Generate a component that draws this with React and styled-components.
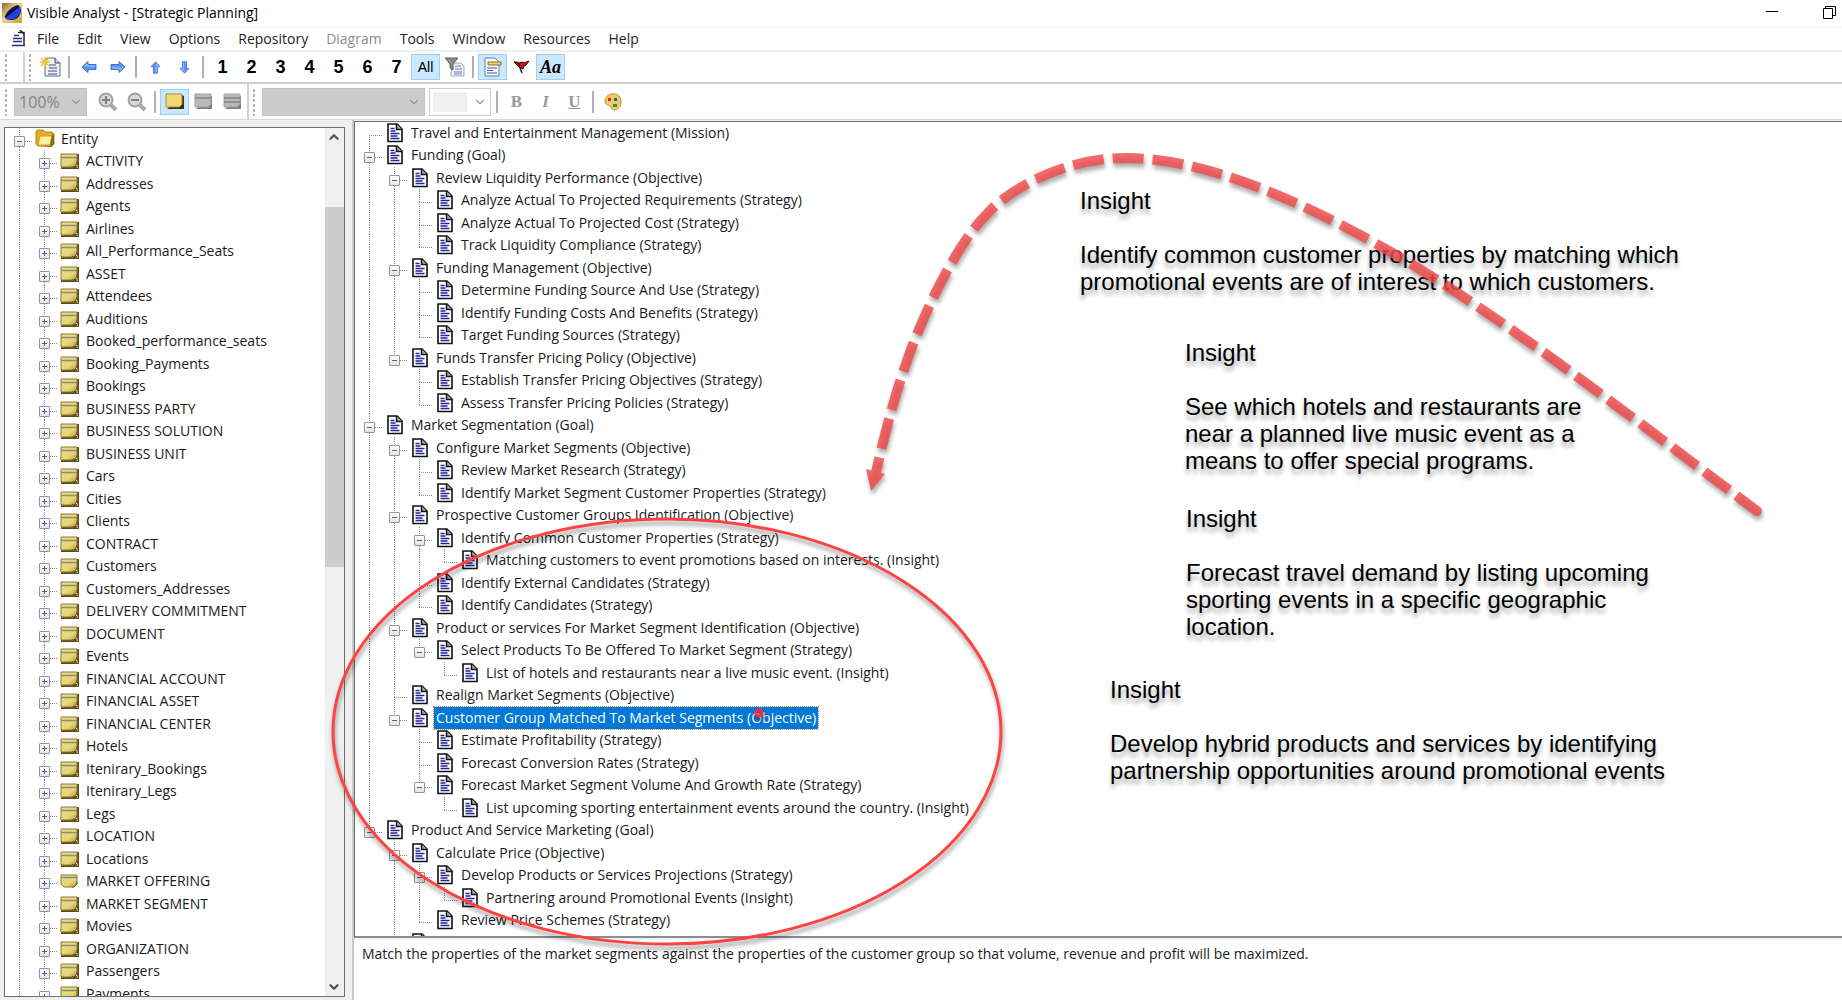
import { ChevronDown, ChevronUp } from 'lucide-react'
import { useState } from 'react'
import styled, { createGlobalStyle } from 'styled-components'

const GlobalStyle = createGlobalStyle`
    * {
        box-sizing: border-box;
    }
    body {
        margin: 0;
        overflow: hidden;
        background: #fff;
        color: #1a1a1a;
        font-family: 'Open Sans', 'Segoe UI', sans-serif;
        font-size: 14px;
    }
    button, select {
        font: inherit;
        color: inherit;
    }
`

const dotsDown = 'repeating-linear-gradient(to bottom, #8a8a8a 0 1px, transparent 1px 2px)'
const dotsAcross = 'repeating-linear-gradient(to right, #8a8a8a 0 1px, transparent 1px 2px)'

const Window = styled.div`
    position: relative;
    display: flex;
    flex-direction: column;
    height: 100vh;
`

const TitleBar = styled.header`
    display: flex;
    align-items: center;
    height: 27px;
    padding: 0 6px 2px 2px;
`

const Title = styled.h1`
    flex: 1;
    margin: 0 0 0 5px;
    font-size: 14px;
    font-weight: 400;
    color: #000;
`

const WindowButton = styled.button`
    display: flex;
    justify-content: flex-end;
    width: 58px;
    padding: 0;
    border: 0;
    background: none;
`

const MenuBar = styled.nav`
    display: flex;
    align-items: center;
    gap: 18px;
    height: 25px;
    padding: 0 12px;
    border-top: 1px solid #f2f2f2;
    border-bottom: 2px solid #f0f0f0;
`

const MenuIcon = styled.span`
    display: flex;
    width: 14px;
    margin-right: -7px;
`

const MenuItem = styled.button`
    padding: 0;
    border: 0;
    background: none;
    line-height: 20px;
    color: #222;
    &:disabled {
        color: #8c8c8c;
    }
`

const ToolBar = styled.div`
    display: flex;
    align-items: center;
    height: ${({ $height }) => $height}px;
    padding-left: 4px;
    border-bottom: ${({ $line }) => $line};
`

const Grip = styled.span`
    width: 4px;
    height: 28px;
    margin-right: ${({ $gap }) => $gap}px;
    background: radial-gradient(#b4b4b4 1px, transparent 1px) 0 0 / 4px 5px;
`

const BandEnd = styled.span`
    width: 2px;
    height: 100%;
    margin-right: 3px;
    background: #d2d2d2;
`

const Separator = styled.span`
    width: 9px;
    height: 22px;
    background: linear-gradient(#b0b0b0, #b0b0b0) 3px 0 / 2px 100% no-repeat;
`

const ToolButton = styled.button`
    display: flex;
    align-items: center;
    justify-content: center;
    width: 29px;
    height: 26px;
    padding: 0;
    border: 1px solid ${({ $active }) => ($active ? '#99d1ff' : 'transparent')};
    background: ${({ $active }) => ($active ? '#cce8ff' : 'none')};
    font-family: ${({ $serif }) => ($serif ? "'Liberation Serif', serif" : "'Liberation Sans', sans-serif")};
    font-size: ${({ $size }) => $size || 18}px;
    font-weight: ${({ $light }) => ($light ? 400 : 700)};
    font-style: ${({ $italic }) => ($italic ? 'italic' : 'normal')};
    text-decoration: ${({ $underline }) => ($underline ? 'underline' : 'none')};
    color: #000;
    &:disabled {
        color: #999;
    }
`

const SelectBox = styled.label`
    display: grid;
    align-items: center;
    width: ${({ $width }) => $width}px;
    height: 28px;
    margin-right: ${({ $gap }) => $gap}px;
    & > * {
        grid-area: 1 / 1;
    }
    & > svg {
        justify-self: end;
        margin-right: 4px;
        pointer-events: none;
    }
`

const Select = styled.select`
    width: 100%;
    height: 28px;
    padding: 0 4px;
    appearance: none;
    border: ${({ $plain }) => ($plain ? '1px solid #ccc' : '1px solid #c0c0c0')};
    border-radius: 0;
    background: ${({ $plain }) => ($plain ? 'linear-gradient(#f0f0f0, #f0f0f0) 3px 3px / 34px 20px no-repeat #fff' : '#ccc')};
    font-size: 16px;
    opacity: 1;
    color: #848484;
`

const Body = styled.main`
    flex: 1;
    display: flex;
    min-height: 0;
    background: #f0f0f0;
`

const EntityPane = styled.aside`
    display: flex;
    width: 341px;
    margin: 7px 0 3px 4px;
    border: 1px solid #6f6f6f;
    background: #fff;
`

const Tree = styled.div`
    flex: 1;
    min-width: 0;
    overflow: hidden;
`

const ScrollBar = styled.div`
    display: flex;
    flex-direction: column;
    justify-content: space-between;
    align-items: center;
    width: 19px;
    padding: 2px 2px 2px 0;
    background: linear-gradient(#cdcdcd, #cdcdcd) 0 79px / 100% 360px no-repeat #f0f0f0;
    color: #555;
`

const Splitter = styled.div`
    width: 9px;
    border-right: 2px solid #c8c8c8;
`

const PlanPane = styled.section`
    flex: 1;
    display: flex;
    flex-direction: column;
    min-width: 0;
    margin-top: 1px;
`

const PlanTree = styled(Tree)`
    border-top: 1px solid #6f6f6f;
    border-left: 1px solid #6f6f6f;
    border-bottom: 2px solid #8c8c8c;
    background: #fff;
`

const Description = styled.p`
    height: 62px;
    margin: 0;
    padding: 3px 8px;
    border-top: 2px solid #f4f4f4;
    background: #fff;
    line-height: 22px;
`

const Row = styled.div`
    display: flex;
    height: 22px;
    padding-left: 2px;
    white-space: nowrap;
    &:nth-child(even) {
        height: 23px;
    }
`

const Guide = styled.span`
    flex: none;
    display: flex;
    justify-content: center;
    width: 25px;
    padding-top: 8px;
    background:
        ${({ $up }) => ($up ? dotsDown : 'none')} 12px 0 / 1px 13px no-repeat,
        ${({ $down }) => ($down ? dotsDown : 'none')} 12px 13px / 1px 10px no-repeat,
        ${({ $across }) => ($across ? dotsAcross : 'none')} 12px 13px / 13px 1px no-repeat;
`

const Toggle = styled.button`
    display: block;
    width: 11px;
    height: 11px;
    padding: 0;
    border: 1px solid #949494;
    border-radius: 1px;
    background:
        linear-gradient(#4763a8, #4763a8) center / 5px 1px no-repeat,
        linear-gradient(#4763a8, #4763a8) center / 1px ${({ $open }) => ($open ? 0 : 5)}px no-repeat,
        linear-gradient(#fff, #e4e4e4);
`

const IconSlot = styled.span`
    flex: none;
    display: flex;
    justify-content: center;
    width: 20px;
    margin: 1px 4px 0 3px;
`

const Label = styled.span`
    height: 22px;
    padding: 0 2px;
    line-height: 21px;
    ${({ $selected }) => $selected && `
        background: #0078d7;
        color: #fff;
        outline: 1px dotted #d08a4a;
    `}
`

const Annotations = styled.svg`
    position: absolute;
    top: 0;
    left: 0;
    overflow: visible;
    pointer-events: none;
    filter: drop-shadow(1px 4px 2px rgba(0, 0, 0, .4));
`

const Note = styled.div`
    position: absolute;
    left: ${({ $x }) => $x}px;
    top: ${({ $y }) => $y}px;
    width: ${({ $width }) => $width}px;
    font-family: 'Liberation Sans', Arial, sans-serif;
    font-size: 24px;
    line-height: 27px;
    color: #000;
    text-shadow: 0 5px 4px rgba(0, 0, 0, .35);
    & > p {
        margin: 0 0 27px;
    }
`

const AppLogo = () => (
    <svg width="20" height="20" viewBox="0 0 20 20">
        <defs>
            <linearGradient id="gold" x1="0" y1="0" x2="1" y2="1">
                <stop offset="0" stopColor="#8f6524" />
                <stop offset=".45" stopColor="#f0d484" />
                <stop offset="1" stopColor="#c99a35" />
            </linearGradient>
        </defs>
        <rect width="20" height="20" fill="url(#gold)" />
        <path d="M3 13C5 8 11 3 16 2l3 5c0 5-4 10-9 10-4 0-7-1-7-4z" fill="#10126e" />
        <path d="M7 12l11-9c2 5-1 11-6 13-3 1-7 1-9-1z" fill="#2440dc" />
        <path d="M3 14L17 3" stroke="#0a0a30" strokeWidth="1.5" />
    </svg>
)

const MenuDoc = () => (
    <svg width="14" height="18" viewBox="0 0 14 18" fill="none">
        <path d="M6 2.500h6v13.500M8 0l4.500 4.500" stroke="#222" strokeWidth="1.500" />
        <path d="M2 5.500h5M1 8.500h9M1 11.500h9M0 15.500h13" stroke="#2b2b85" strokeWidth="1.500" />
    </svg>
)

const DocIcon = () => (
    <svg width="16" height="20" viewBox="0 0 16 20">
        <path d="M1 1h9l5 5v12.500H1z" fill="#fff" stroke="#111" strokeWidth="1.600" />
        <path d="M9.500 1v5.500H15" fill="#aaa" stroke="#111" strokeWidth="1.500" />
        <path d="M3.500 5.500h4M3.500 8h5M3.500 10.500h9M3.500 13h7M3.500 15.500h9" stroke="#22229a" strokeWidth="1.400" />
    </svg>
)

const EntityIcon = ({ plain }) => (
    <svg width="20" height="20" viewBox="0 0 20 20">
        <defs>
            <linearGradient id="entity" x1="0" y1="0" x2="1" y2="1">
                <stop offset="0" stopColor="#e9dc8c" />
                <stop offset=".6" stopColor="#e8d577" />
                <stop offset="1" stopColor="#b7983a" />
            </linearGradient>
        </defs>
        {!plain && <path d="M1 18h18V3h-2v12H1z" fill="#5b4c1c" />}
        {!plain && <path d="M16 17l2-3v3z" fill="#c4a93f" />}
        <path d={plain ? 'M1 4h16v9l-3 3H4l-3-3z' : 'M1 3h16v9l-3 4H1z'} fill="url(#entity)" stroke="#8c7836" />
        <path d="M1 6.500h16" stroke="#8d8a72" strokeWidth="1.500" />
        <path d="M12 16c3 0 5-2 5-5" fill="none" stroke="#6b5920" />
    </svg>
)

const FolderIcon = () => (
    <svg width="20" height="19" viewBox="0 0 20 19">
        <path d="M1 3l1-2h6l2 2h7l2 2v10l-2 2H3l-2-2z" fill="#e3ab25" stroke="#b5841a" />
        <path d="M5 7h12l-2 9H3z" fill="#fff0a0" stroke="#d19c1e" />
        <path d="M17 6l2-1v10l-3 3H5l10-1z" fill="#8a6a1c" />
    </svg>
)

const NewIcon = () => (
    <svg width="21" height="20" viewBox="0 0 21 20">
        <path d="M7 1h8l5 5v13H5V4z" fill="#eef3fb" stroke="#5b6f96" />
        <path d="M15 1v5h5" fill="#cdd9ee" stroke="#33466e" />
        <path d="M9 8h7M9 11h8M8 14h9M8 17h9" stroke="#3b4d78" />
        <path d="M5 0v10M0 5h10M1 1l8 8M9 1L1 9" stroke="#edc531" strokeWidth="1.500" />
    </svg>
)

const ArrowIcon = ({ turn, size }) => (
    <svg width={size} height={size} viewBox="0 0 16 16">
        <g transform={`rotate(${turn} 8 8)`}>
            <path d="M1 8l6-5.500v3h8v5H7v3z" fill="#5f93ee" stroke="#3f6fcf" />
            <path d="M3 8l3-3v2h8" fill="none" stroke="#a4c6ff" />
        </g>
    </svg>
)

const FilterIcon = () => (
    <svg width="20" height="20" viewBox="0 0 20 20">
        <path d="M7 6h9l3 3v10H6z" fill="#eef2fa" stroke="#9aa8c4" />
        <path d="M10 9h6M10 12h7M9 15h8M9 17h8" stroke="#7080a8" />
        <path d="M0 1h13L8 7v6l-3-2V7z" fill="#8b8b8b" stroke="#5d5d5d" />
    </svg>
)

const HighlightDocIcon = () => (
    <svg width="18" height="20" viewBox="0 0 18 20">
        <path d="M1 1h10l4 4v14H1z" fill="#f4f7fd" stroke="#6a7ba4" />
        <path d="M3 11h10M3 13.500h6M3 16h10" stroke="#4c5f91" />
        <path d="M4 5h13v3H4z" fill="#f3d255" stroke="#8d762a" />
    </svg>
)

const FlagIcon = () => (
    <svg width="16" height="14" viewBox="0 0 16 14">
        <path d="M0 2h3l2 1 3-1 2 1 5-2-3 4-2 1-1 3-4-2z" fill="#d80d10" stroke="#300" />
        <path d="M4 3l4 10" stroke="#222" strokeWidth="1.500" />
    </svg>
)

const ZoomIcon = ({ plus }) => (
    <svg width="20" height="20" viewBox="0 0 20 20">
        <circle cx="8" cy="8" r="6.500" fill="#d8d8d8" stroke="#a0a0a0" strokeWidth="2" />
        <path d={plus ? 'M4 8h8M8 4v8' : 'M4 8h8'} stroke="#808080" strokeWidth="2" />
        <path d="M13 13l5 5" stroke="#a8a8a8" strokeWidth="4" />
    </svg>
)

const GreyBoxIcon = ({ lines }) => (
    <svg width="19" height="17" viewBox="0 0 19 17">
        <path d="M2 16h16V3h-2z" fill="#808080" />
        <path d="M1 1h16v10l-3 3H1z" fill="#b9b9b9" stroke="#a0a0a0" />
        {lines.map(y => <path key={y} d={`M1 ${y}h16`} stroke="#858585" strokeWidth="1.500" />)}
    </svg>
)

const NoteIcon = () => (
    <svg width="20" height="17" viewBox="0 0 20 17">
        <path d="M2 16h17V3l-2-1z" fill="#3c3210" />
        <path d="M1 1h16v10l-3 3H1z" fill="#f2d976" stroke="#a88d32" />
        <path d="M14 14c0-2 1-3 3-3z" fill="#fff2b0" />
    </svg>
)

const PaletteIcon = () => (
    <svg width="18" height="18" viewBox="0 0 18 18">
        <path d="M8 1c6-1 9 3 9 8 0 4-3 8-7 8-3 0-2-3-4-4-1-1-5-1-5-5 0-3 3-7 7-7z" fill="#f0cd62" stroke="#b88f32" />
        <path d="M4 5h3v3H4z" fill="#d8281c" />
        <path d="M10 5h3v3h-3z" fill="#2457c8" />
        <path d="M9 11h4v3H9z" fill="#279a34" />
    </svg>
)

const menuItems = ['File', 'Edit', 'View', 'Options', 'Repository', 'Diagram', 'Tools', 'Window', 'Resources', 'Help']

const entities = [
    'ACTIVITY', 'Addresses', 'Agents', 'Airlines', 'All_Performance_Seats', 'ASSET', 'Attendees', 'Auditions',
    'Booked_performance_seats', 'Booking_Payments', 'Bookings', 'BUSINESS PARTY', 'BUSINESS SOLUTION',
    'BUSINESS UNIT', 'Cars', 'Cities', 'Clients', 'CONTRACT', 'Customers', 'Customers_Addresses',
    'DELIVERY COMMITMENT', 'DOCUMENT', 'Events', 'FINANCIAL ACCOUNT', 'FINANCIAL ASSET', 'FINANCIAL CENTER',
    'Hotels', 'Itenirary_Bookings', 'Itenirary_Legs', 'Legs', 'LOCATION', 'Locations', 'MARKET OFFERING',
    'MARKET SEGMENT', 'Movies', 'ORGANIZATION', 'Passengers', 'Payments',
]

// [depth, label]
const plan = [
    [0, 'Travel and Entertainment Management (Mission)'],
    [0, 'Funding (Goal)'],
    [1, 'Review Liquidity Performance (Objective)'],
    [2, 'Analyze Actual To Projected Requirements (Strategy)'],
    [2, 'Analyze Actual To Projected Cost (Strategy)'],
    [2, 'Track Liquidity Compliance (Strategy)'],
    [1, 'Funding Management (Objective)'],
    [2, 'Determine Funding Source And Use (Strategy)'],
    [2, 'Identify Funding Costs And Benefits (Strategy)'],
    [2, 'Target Funding Sources (Strategy)'],
    [1, 'Funds Transfer Pricing Policy (Objective)'],
    [2, 'Establish Transfer Pricing Objectives (Strategy)'],
    [2, 'Assess Transfer Pricing Policies (Strategy)'],
    [0, 'Market Segmentation (Goal)'],
    [1, 'Configure Market Segments (Objective)'],
    [2, 'Review Market Research (Strategy)'],
    [2, 'Identify Market Segment Customer Properties (Strategy)'],
    [1, 'Prospective Customer Groups Identification (Objective)'],
    [2, 'Identify Common Customer Properties (Strategy)'],
    [3, 'Matching customers to event promotions based on interests. (Insight)'],
    [2, 'Identify External Candidates (Strategy)'],
    [2, 'Identify Candidates (Strategy)'],
    [1, 'Product or services For Market Segment Identification (Objective)'],
    [2, 'Select Products To Be Offered To Market Segment (Strategy)'],
    [3, 'List of hotels and restaurants near a live music event. (Insight)'],
    [1, 'Realign Market Segments (Objective)'],
    [1, 'Customer Group Matched To Market Segments (Objective)'],
    [2, 'Estimate Profitability (Strategy)'],
    [2, 'Forecast Conversion Rates (Strategy)'],
    [2, 'Forecast Market Segment Volume And Growth Rate (Strategy)'],
    [3, 'List upcoming sporting entertainment events around the country. (Insight)'],
    [0, 'Product And Service Marketing (Goal)'],
    [1, 'Calculate Price (Objective)'],
    [2, 'Develop Products or Services Projections (Strategy)'],
    [3, 'Partnering around Promotional Events (Insight)'],
    [2, 'Review Price Schemes (Strategy)'],
    [1, ''],
]

const notes = [
    { x: 1080, y: 187, width: 640, text: 'Identify common customer properties by matching which promotional events are of interest to which customers.' },
    { x: 1185, y: 339, width: 420, text: 'See which hotels and restaurants are near a planned live music event as a means to offer special programs.' },
    { x: 1186, y: 505, width: 480, text: 'Forecast travel demand by listing upcoming sporting events in a specific geographic location.' },
    { x: 1110, y: 676, width: 600, text: 'Develop hybrid products and services by identifying partnership opportunities around promotional events' },
]

// true when a later row sits on the same level, before the branch closes
const continues = (rows, index, level) => {
    const next = rows.slice(index + 1).find(([depth]) => depth <= level)
    return Boolean(next) && next[0] === level
}

const PlanRow = ({ index, selected, onSelect }) => {
    const [depth, label] = plan[index]
    const hasChildren = index + 1 < plan.length && plan[index + 1][0] > depth
    return (
        <Row role="treeitem" aria-selected={selected} onClick={onSelect}>
            {Array.from({ length: depth }, (_, level) => {
                const line = continues(plan, index, level)
                return <Guide key={level} $up={line} $down={line} />
            })}
            <Guide $up={index > 0} $down={continues(plan, index, depth)} $across>
                {hasChildren && <Toggle $open aria-label="Collapse" />}
            </Guide>
            <IconSlot><DocIcon /></IconSlot>
            <Label $selected={selected}>{label}</Label>
        </Row>
    )
}

const App = () => {
    const [selected, setSelected] = useState(26)
    const [level, setLevel] = useState('All')

    return (
        <Window>
            <GlobalStyle />
            <TitleBar>
                <AppLogo />
                <Title>Visible Analyst - [Strategic Planning]</Title>
                <WindowButton aria-label="Minimize">
                    <svg width="12" height="13" viewBox="0 0 12 13"><path d="M0 5.500h12" stroke="#000" /></svg>
                </WindowButton>
                <WindowButton aria-label="Restore">
                    <svg width="13" height="13" viewBox="0 0 13 13" fill="none" stroke="#000">
                        <path d="M.5 2.500h9v10h-9zM2.500 2.500v-2h10v9h-3" />
                    </svg>
                </WindowButton>
            </TitleBar>

            <MenuBar>
                <MenuIcon><MenuDoc /></MenuIcon>
                {menuItems.map(item => (
                    <MenuItem key={item} disabled={item === 'Diagram'}>{item}</MenuItem>
                ))}
            </MenuBar>

            <ToolBar $height={32} $line="2px solid #cfcfcf">
                <Grip $gap={15} />
                <BandEnd />
                <Grip $gap={4} />
                <ToolButton aria-label="New"><NewIcon /></ToolButton>
                <Separator />
                <ToolButton aria-label="Back"><ArrowIcon turn={0} size={16} /></ToolButton>
                <ToolButton aria-label="Forward"><ArrowIcon turn={180} size={16} /></ToolButton>
                <Separator />
                <ToolButton aria-label="Up"><ArrowIcon turn={90} size={13} /></ToolButton>
                <ToolButton aria-label="Down"><ArrowIcon turn={270} size={13} /></ToolButton>
                <Separator />
                {[1, 2, 3, 4, 5, 6, 7].map(n => (
                    <ToolButton key={n} $active={level === n} onClick={() => setLevel(n)}>{n}</ToolButton>
                ))}
                <ToolButton $active={level === 'All'} $light $size={14} onClick={() => setLevel('All')}>All</ToolButton>
                <ToolButton aria-label="Filter"><FilterIcon /></ToolButton>
                <Separator />
                <ToolButton $active aria-label="Highlight"><HighlightDocIcon /></ToolButton>
                <ToolButton aria-label="Flag"><FlagIcon /></ToolButton>
                <ToolButton $active $serif $italic $size={18}>Aa</ToolButton>
            </ToolBar>

            <ToolBar $height={36} $line="1px solid #d8d8d8">
                <Grip $gap={6} />
                <SelectBox $width={73} $gap={6}>
                    <Select disabled aria-label="Zoom"><option>100%</option></Select>
                    <ChevronDown size={14} color="#999" />
                </SelectBox>
                <ToolButton disabled aria-label="Zoom in"><ZoomIcon plus /></ToolButton>
                <ToolButton disabled aria-label="Zoom out"><ZoomIcon /></ToolButton>
                <Separator />
                <ToolButton $active aria-label="Entity view"><NoteIcon /></ToolButton>
                <ToolButton disabled aria-label="Heading view"><GreyBoxIcon lines={[5]} /></ToolButton>
                <ToolButton disabled aria-label="Detail view"><GreyBoxIcon lines={[5, 9]} /></ToolButton>
                <BandEnd />
                <Grip $gap={6} />
                <SelectBox $width={163} $gap={4}>
                    <Select disabled aria-label="Font" />
                    <ChevronDown size={14} color="#999" />
                </SelectBox>
                <SelectBox $width={62} $gap={2}>
                    <Select disabled $plain aria-label="Font size" />
                    <ChevronDown size={14} color="#999" />
                </SelectBox>
                <Separator />
                <ToolButton disabled $serif $size={17}>B</ToolButton>
                <ToolButton disabled $serif $italic $size={17}>I</ToolButton>
                <ToolButton disabled $serif $underline $size={17}>U</ToolButton>
                <Separator />
                <ToolButton aria-label="Colors"><PaletteIcon /></ToolButton>
            </ToolBar>

            <Body>
                <EntityPane>
                    <Tree role="tree">
                        <Row role="treeitem">
                            <Guide $up $down $across><Toggle $open aria-label="Collapse" /></Guide>
                            <IconSlot><FolderIcon /></IconSlot>
                            <Label>Entity</Label>
                        </Row>
                        {entities.map(name => (
                            <Row key={name} role="treeitem">
                                <Guide $up $down />
                                <Guide $up $down $across><Toggle aria-label="Expand" /></Guide>
                                <IconSlot><EntityIcon plain={name === 'MARKET OFFERING'} /></IconSlot>
                                <Label>{name}</Label>
                            </Row>
                        ))}
                    </Tree>
                    <ScrollBar>
                        <ChevronUp size={14} strokeWidth={4} />
                        <ChevronDown size={14} strokeWidth={4} />
                    </ScrollBar>
                </EntityPane>
                <Splitter />
                <PlanPane>
                    <PlanTree role="tree">
                        {plan.map((row, index) => (
                            <PlanRow
                                key={index}
                                index={index}
                                selected={index === selected}
                                onSelect={() => setSelected(index)}
                            />
                        ))}
                    </PlanTree>
                    <Description>
                        Match the properties of the market segments against the properties of the customer group so that volume, revenue and profit will be maximized.
                    </Description>
                </PlanPane>
            </Body>

            {notes.map(note => (
                <Note key={note.text} $x={note.x} $y={note.y} $width={note.width}>
                    <p>Insight</p>
                    <p>{note.text}</p>
                </Note>
            ))}

            <Annotations width="1842" height="1000" viewBox="0 0 1842 1000" fill="none">
                <ellipse cx="667" cy="731.500" rx="334" ry="212.500" stroke="#ff4242" strokeWidth="3" />
                <circle cx="759" cy="713" r="3" stroke="#ff2a3a" strokeWidth="3" />
                <g opacity=".82">
                    <path
                        d="M1757 511C1635 420 1501 315 1391 252C1301 201 1208 159 1128 158C1075 157 1015 182 985 216C955 247 925 311 909 355C896 391 885 432 876 472"
                        stroke="#f04a4a"
                        strokeWidth="10"
                        strokeDasharray="31 9"
                        strokeDashoffset="5"
                    />
                    <circle cx="1757" cy="511" r="5" fill="#f04a4a" />
                    <path d="M866 469l19 5-14 17z" fill="#f04a4a" />
                </g>
            </Annotations>
        </Window>
    )
}

export default App
